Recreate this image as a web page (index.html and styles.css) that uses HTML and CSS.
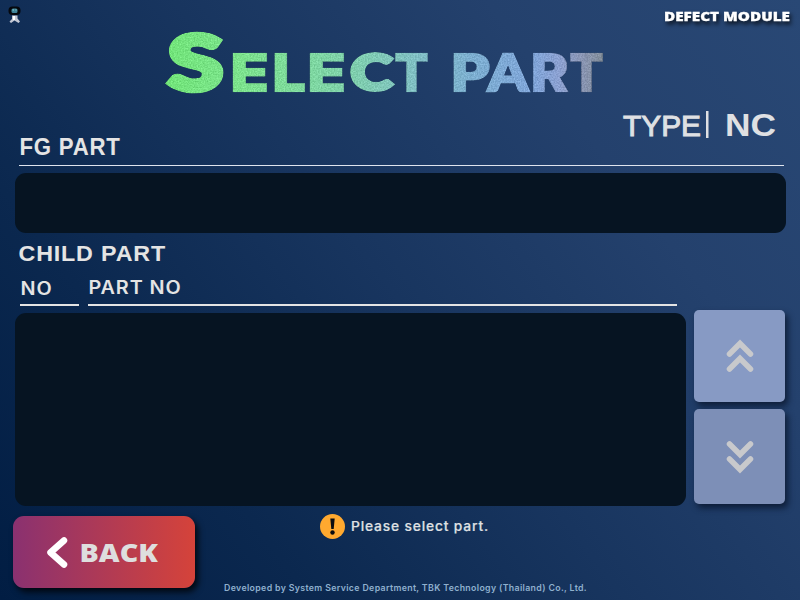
FILE: index.html
```html
<!DOCTYPE html>
<html lang="en">
<head>
<meta charset="utf-8">
<title>Defect Module</title>
<link rel="stylesheet" href="styles.css">
</head>
<body>
<div class="screen">
  <header class="topbar">
    <svg class="robot" width="14" height="18" viewBox="0 0 14 18">
      <rect x="0.500" y="0.500" width="12" height="8.500" rx="4" fill="#05080d"/>
      <rect x="3.500" y="2.500" width="6" height="4.500" rx="1.500" fill="#3f8297"/>
      <path d="M4.500 4h1.500M7.500 4h1" stroke="#8cd5dc"/>
      <path d="M4 9.500h5.500v3l2.500 3-1.500 1.500-4-2.500-3.500 2.500L1.500 15.500l2.500-2.500z" fill="#c3c8d4"/>
      <path d="M6 10v4" stroke="#fff" stroke-width="2"/>
    </svg>
    <svg class="module" width="126" height="30"><text x="0" y="20.500" textLength="126" lengthAdjust="spacingAndGlyphs">DEFECT MODULE</text></svg>
  </header>

  <h1 class="title">
    <svg width="800" height="76" viewBox="0 30 800 76">
      <defs>
        <linearGradient id="ink" gradientUnits="userSpaceOnUse" x1="167" y1="0" x2="603" y2="0">
          <stop offset="0" stop-color="#72e47a"/><stop offset=".16" stop-color="#7ce38c"/>
          <stop offset=".4" stop-color="#7fd2a9"/><stop offset=".57" stop-color="#80bfc3"/>
          <stop offset=".7" stop-color="#7caed0"/><stop offset=".84" stop-color="#80a5d9"/>
          <stop offset=".9" stop-color="#8ba0d0"/><stop offset=".95" stop-color="#8995b4"/><stop offset="1" stop-color="#828d99"/>
        </linearGradient>
        <filter id="grain" filterUnits="userSpaceOnUse" x="150" y="20" width="480" height="90" color-interpolation-filters="sRGB">
          <feTurbulence type="fractalNoise" baseFrequency=".7" numOctaves="2" seed="4" result="n"/>
          <feColorMatrix in="n" values="1 0 0 0 0  1 0 0 0 0  1 0 0 0 0  0 0 0 0 1" result="g"/>
          <feComposite in="SourceGraphic" in2="g" operator="arithmetic" k1="0" k2="1" k3=".24" k4="-.12" result="m"/>
          <feComposite in="m" in2="SourceGraphic" operator="in"/>
        </filter>
      </defs>
      <g class="title-ink" fill="url(#ink)" stroke="url(#ink)" filter="url(#grain)">
        <text class="cap" x="168" y="89.500" textLength="55" lengthAdjust="spacingAndGlyphs">S</text>
        <text class="small" y="91.500"><tspan x="230" textLength="39.500" lengthAdjust="spacingAndGlyphs">E</tspan><tspan x="272" textLength="34.500" lengthAdjust="spacingAndGlyphs">L</tspan><tspan x="307" textLength="39.500" lengthAdjust="spacingAndGlyphs">E</tspan><tspan class="round" y="90" x="350.500" textLength="42" lengthAdjust="spacingAndGlyphs">C</tspan><tspan y="91.500" x="394" textLength="35" lengthAdjust="spacingAndGlyphs">T</tspan></text>
        <text class="small" y="91.500"><tspan x="451" textLength="40" lengthAdjust="spacingAndGlyphs">P</tspan><tspan class="peak" y="90.500" x="488" textLength="40" lengthAdjust="spacingAndGlyphs">A</tspan><tspan y="91.500" x="530.500" textLength="38.500" lengthAdjust="spacingAndGlyphs">R</tspan><tspan x="569" textLength="35" lengthAdjust="spacingAndGlyphs">T</tspan></text>
      </g>
    </svg>
  </h1>

  <section class="fg-head">
    <svg width="110" height="59"><text class="heading" x="0.500" y="48.500" textLength="101" lengthAdjust="spacingAndGlyphs">FG PART</text></svg>
    <svg width="162" height="59">
      <text class="type" x="1" y="29.500" textLength="78" lengthAdjust="spacingAndGlyphs">TYPE</text>
      <rect x="84" y="5" width="2.500" height="27" fill="#dfe0e3"/>
      <text class="type-value" x="103" y="29.500" textLength="51" lengthAdjust="spacingAndGlyphs">NC</text>
    </svg>
  </section>
  <div class="panel fg-panel"></div>

  <svg class="child-head" width="160" height="37"><text class="heading child" x="-0.500" y="27.500" textLength="147.500" lengthAdjust="spacingAndGlyphs">CHILD PART</text></svg>

  <main class="list">
    <div class="list-main">
      <div class="columns">
        <div class="column"><svg width="50" height="34"><text class="label" x="-0.500" y="25" textLength="32" lengthAdjust="spacingAndGlyphs">NO</text></svg></div>
        <div class="column"><svg width="110" height="34"><text class="label" x="-0.500" y="24" textLength="93" lengthAdjust="spacingAndGlyphs">PART NO</text></svg></div>
      </div>
      <div class="panel child-panel"></div>
    </div>
    <div class="scroll">
      <button class="up" aria-label="Up"><svg width="30" height="36" viewBox="0 0 30 36"><path d="M4.500 16 15 5.500l10.500 10.500M4.500 31 15 20.500l10.500 10.500"/></svg></button>
      <button class="down" aria-label="Down"><svg width="30" height="36" viewBox="0 0 30 36"><path d="M4.500 5l10.500 10.500L25.500 5M4.500 20l10.500 10.500 10.500-10.500"/></svg></button>
    </div>
  </main>

  <footer class="bottom">
    <button class="back">
      <svg width="182" height="72">
        <path d="M51 24.500 37.500 36.500 51 48.500" fill="none" stroke="#fff" stroke-width="6.500" stroke-linecap="round" stroke-linejoin="round"/>
        <text x="66.500" y="45.500" textLength="78.500" lengthAdjust="spacingAndGlyphs">BACK</text>
      </svg>
    </button>
    <div class="info">
      <div class="notice">
        <svg width="25" height="25" viewBox="0 0 25 25"><circle cx="12.500" cy="12.500" r="12.500" fill="#ffa92f"/><path d="M10.300 4.500h4.400l-1 10.500h-2.400z" fill="#0b0c10"/><circle cx="12.500" cy="18.500" r="2.200" fill="#0b0c10"/></svg>
        <svg width="140" height="25"><text class="message" x="0" y="17" textLength="138" lengthAdjust="spacingAndGlyphs">Please select part.</text></svg>
      </div>
      <svg class="credit" width="364" height="16"><text x="0" y="11" textLength="363" lengthAdjust="spacingAndGlyphs">Developed by System Service Department, TBK Technology (Thailand) Co., Ltd.</text></svg>
    </div>
  </footer>
</div>
</body>
</html>
```
FILE: styles.css
```css
* { box-sizing: border-box; }
body { margin: 0; }
svg { display: block; overflow: visible; flex: none; }
button { border: 0; padding: 0; }

.screen {
  width: 800px;
  height: 600px;
  overflow: hidden;
  background: linear-gradient(53deg, #011d43 0%, #0b284f 25%, #18355f 50%, #24416d 75%, #294875 100%);
  font-family: "Liberation Sans", sans-serif;
}

.topbar { display: flex; justify-content: space-between; height: 30px; padding: 0 10px 0 8px; }
.robot { margin-top: 6px; }
.module { filter: drop-shadow(2px 3px 2px rgba(0, 0, 0, .75)); }
.module text { font: 800 13px "Open Sans", sans-serif; fill: #fff; stroke: #fff; stroke-width: .3; }

.title { height: 76px; margin: 0; }
.title-ink { font-weight: 900; }
.cap { font-family: Lato, sans-serif; font-size: 76px; stroke-width: 6; }
.small { font-family: Inter, sans-serif; font-size: 53px; stroke-width: .6; }
.round { font-family: Lato, sans-serif; font-size: 49px; stroke-width: 4; }
.peak { font-family: Lato, sans-serif; font-size: 51px; stroke-width: 3; }

.fg-head {
  display: flex;
  justify-content: space-between;
  height: 60px;
  margin: 0 16px 0 19px;
  border-bottom: 1px solid #dfe4ee;
}
.heading { font-size: 23.500px; font-weight: 700; letter-spacing: .8px; fill: #e4e4e4; }
.child { font-size: 22.500px; letter-spacing: .8px; }
.type { font-size: 30px; fill: #dfe0e3; stroke: #dfe0e3; stroke-width: 1; }
.type-value { font-size: 32px; font-weight: 700; fill: #dfe0e3; }

.panel { background: #061422; border-radius: 11px; }
.fg-panel { height: 60px; margin: 7px 14px 0 15px; }
.child-head { margin-left: 19px; }

.list { display: grid; grid-template-columns: 671px 91px; gap: 8px; height: 236px; margin-left: 15px; }
.columns { display: grid; grid-template-columns: 59px 589px; gap: 9px; margin-left: 5px; }
.column { height: 36px; padding-left: 1px; border-bottom: 2px solid #e4e4e4; }
.label { font: 600 18px Inter, sans-serif; letter-spacing: .8px; fill: #e4e4e4; }
.child-panel { height: 193px; margin-top: 7px; }

.scroll { display: flex; flex-direction: column; gap: 7px; padding-top: 40px; }
.scroll button { display: flex; align-items: center; justify-content: center; border-radius: 5px; box-shadow: 3px 4px 6px rgba(5, 15, 35, .7); }
.scroll path { fill: none; stroke: #c8c9cc; stroke-width: 5.500; stroke-linecap: round; stroke-linejoin: miter; }
.up { height: 92px; background: #879ac4; }
.down { height: 95px; background: #7d8fb7; }

.bottom { display: flex; padding: 8px 0 0 13px; }
.back {
  margin-top: 2px;
  width: 182px;
  height: 72px;
  border-radius: 11px;
  background: linear-gradient(90deg, #8a3170, #d5433a);
  box-shadow: 3px 4px 6px rgba(0, 0, 0, .8);
}
.back text { font: 800 24.500px "Open Sans", sans-serif; fill: #dedede; }
.info { padding-left: 29px; }
.notice { display: flex; gap: 6px; padding-left: 96px; height: 66px; }
.message { font: 500 13px Inter, sans-serif; letter-spacing: .8px; fill: #dfe0e3; stroke: #dfe0e3; stroke-width: .2; }
.credit text { font: 600 9px Inter, sans-serif; letter-spacing: .35px; fill: #8fb0ce; }
```
